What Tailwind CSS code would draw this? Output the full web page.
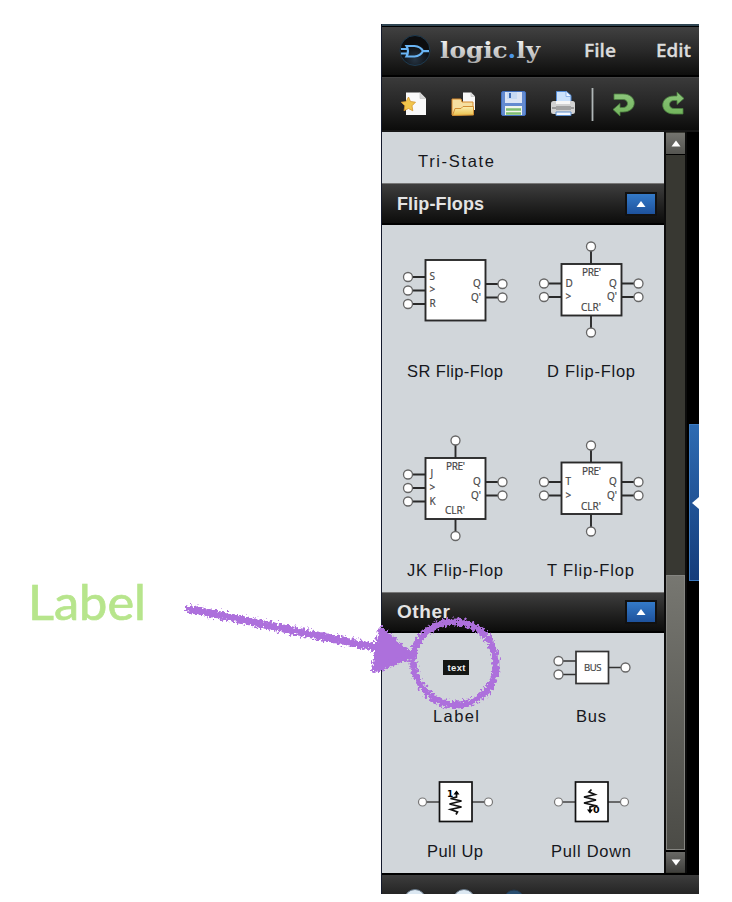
<!DOCTYPE html>
<html lang="en">
<head>
<meta charset="utf-8">
<title>logic.ly</title>
<script src="https://cdn.jsdelivr.net/npm/@tailwindcss/browser@4"></script>
</head>
<body class="bg-white">
<main class="relative w-[732px] h-[902px] overflow-hidden bg-white pt-6 pl-[381px]">
  <p class="absolute left-[28px] top-[566px] whitespace-nowrap">
    <svg class="block" width="140" height="74" font-family="Lato, sans-serif"><text x="0" y="54" font-size="48" fill="#b7e58c" stroke="#b7e58c" stroke-width=".7" textLength="118" lengthAdjust="spacingAndGlyphs">Label</text></svg>
  </p>

  <section class="flex flex-col w-[318px] h-[870px] bg-black border-l border-[#141a2c] overflow-hidden">
    <div class="h-[2px] shrink-0 bg-[#304653]"></div>
    <header class="h-[51px] shrink-0 border-t border-black bg-linear-to-b from-[#414141] via-[#292929] to-[#0e0e0d] border-b-2 border-b-black">
      <svg class="block" width="317" height="48" viewBox="382 27 317 48">
        <defs>
          <radialGradient id="orb" cy=".8"><stop offset="0" stop-color="#253443"/><stop offset="1" stop-color="#0c0d0f"/></radialGradient>
          <linearGradient id="silver" x2="0" y2="1"><stop offset="0" stop-color="#fff"/><stop offset="1" stop-color="#aaa"/></linearGradient>
        </defs>
        <circle cx="415" cy="50.500" r="15" fill="url(#orb)" stroke="#1d3a50"/>
        <g fill="none" stroke="#69b4f4" stroke-width="2.200"><path d="M406.500 46h8q6 .500 8.500 5q-2.500 5-8.500 5.500h-8q3-5.500 0-10.500ZM401 49h7M401 53.500h7M423 51.200h6"/></g>
        <text x="440" y="58" font-family="DejaVu Serif, serif" font-weight="bold" font-size="23" fill="url(#silver)" textLength="100" lengthAdjust="spacingAndGlyphs">logic<tspan fill="#4b96e6">.</tspan>ly</text>
        <g font-family="Open Sans, sans-serif" font-size="18" font-weight="600" fill="#dcdcdc" stroke="#dcdcdc" stroke-width=".3"><text x="584" y="57" textLength="32" lengthAdjust="spacingAndGlyphs">File</text><text x="656" y="57" textLength="35" lengthAdjust="spacingAndGlyphs">Edit</text></g>
      </svg>
    </header>
    <div class="h-[55px] shrink-0 border-t border-[#444] bg-linear-to-b from-[#3a3a3a] via-[#262626] to-[#0c0c0b] border-b-2 border-b-[#171717]">
      <svg class="block" width="317" height="52" viewBox="382 78 317 52">
        <defs>
          <linearGradient id="gold" x2="0" y2="1"><stop offset="0" stop-color="#fbeeb0"/><stop offset="1" stop-color="#eac04c"/></linearGradient>
          <linearGradient id="green" x2="0" y2="1"><stop offset="0" stop-color="#8cc57b"/><stop offset="1" stop-color="#72b45c"/></linearGradient>
        </defs>
        <path d="M406 92.500h14l6 6V115h-20Z" fill="#f9f9f9"/><path d="M420 92.500v6h6" fill="#d7d7d7" stroke="#c4c4c4" stroke-width=".7"/>
        <path d="m408.500 97 2 4.500 5 .700-3.500 3.600.8 5-4.300-2.300-4.500 2.300.8-5-3.600-3.600 5-.700Z" fill="#f1c64c" stroke="#d5962c" stroke-width=".8"/>
        <path d="M463 92.500h8l4 4V110h-12Z" fill="#f8f8f8"/><path d="M471 92.500v4h4" fill="#ddd" stroke="#bbb" stroke-width=".6"/>
        <path d="M452 115V99h9l1 3h11v12Z" fill="#f6dfa0" stroke="#d78a2d"/><path d="M452.500 115.500 455 108.500h6l2-2h10.500v8.500Z" fill="url(#gold)" stroke="#d28f35"/>
        <rect x="501.500" y="91.500" width="24" height="24" rx="1.500" fill="#648bd0" stroke="#4371c0"/><path d="M505 92h17v11h-17Z" fill="#dce5f5"/><path d="M507 92h10v7h-10Z" fill="#c7daf4"/><path d="M509 93h2v5h-2Z" fill="#3f6cb5"/><path d="M505 106h17v9h-17Z" fill="#f1f5ed"/><path d="M506 109.500h15M506 113.500h15" stroke="#7fbd70" stroke-width="2.500"/>
        <path d="M556.500 103V91.500h10l4.500 4V104Z" fill="#cce2fb" stroke="#568ed9"/><path d="M566 91.500v5h5" fill="#edf5ff" stroke="#6d9ce0" stroke-width=".7"/>
        <rect x="551" y="101" width="24" height="13" rx="2.500" fill="#d2d2d2"/><path d="M556 101h14v3h-14Z" fill="#f7f7f7"/><path d="M552 108h22" stroke="#8a8a8a" stroke-width="1.500"/><path d="M556 106h15v4h-15Z" fill="#a2a2a2"/><path d="M556 112h15v3.500h-15Z" fill="#f5f9ff" stroke="#5c8ecd"/>
        <path d="M592.500 88v33" stroke="#b0b6b7" stroke-width="1.800"/>
        <path d="M614 94h9c15 0 15 18 0 18h-3v4l-7-6.500 7-6v4h3c6 0 6-8 0-8h-9Z" fill="url(#green)" stroke="#4b8140" stroke-width=".8"/>
        <path d="M683 114h-9c-15 0-15-18 0-18h3v-4l7 6.500-7 6v-4h-3c-6 0-6 8 0 8h9Z" fill="url(#green)" stroke="#4b8140" stroke-width=".8"/>
      </svg>
    </div>

    <div class="flex h-[741px] shrink-0">
      <div class="w-[282px] bg-[#d1d6da]">
        <svg class="block h-[51px] w-[282px]" viewBox="382 132 282 51"><text x="418" y="166.500" font-family="Liberation Sans, sans-serif" font-size="16.500" fill="#16171c" textLength="76">Tri-State</text></svg>
        <div class="flex h-[42px] items-center justify-between border-t border-[#777] border-b-2 border-b-black bg-linear-to-b from-[#3e3e3e] to-[#0d0d0c] pl-[15px] pr-[7px]">
          <svg width="95" height="24"><text y="17.500" font-family="Liberation Sans, sans-serif" font-weight="bold" font-size="18" fill="#e4e4e4" textLength="87">Flip-Flops</text></svg>
          <span class="flex h-[24px] w-[32px] items-center justify-center border-2 border-[#111] bg-linear-to-b from-[#347ac8] to-[#1e529c]"><svg width="10" height="8"><path d="m.5 7 4.500-6 4.500 6Z" fill="#fff"/></svg></span>
        </div>

        <div class="grid h-[367px] grid-cols-[136px_136px] grid-rows-[183px_184px] pl-[5px] text-[#16171c]">
          <svg width="136" height="183" viewBox="387 225 136 183">
            <g fill="#fff" stroke="#2a2a2a" stroke-width="1.900"><path d="M408 277h18M408 290.500h18M408 304h18M485 284h18M485 297.500h18"/><rect x="425.500" y="260" width="60" height="60.500"/><g stroke="#666" stroke-width="1.300"><circle cx="408" cy="277" r="4.500"/><circle cx="408" cy="290.500" r="4.500"/><circle cx="408" cy="304" r="4.500"/><circle cx="502.500" cy="284" r="4.500"/><circle cx="502.500" cy="297.500" r="4.500"/></g></g>
            <g font-family="Open Sans, sans-serif" font-size="10" fill="#444" stroke="#444" stroke-width=".2"><text x="429.500" y="279.500">S</text><text x="429.500" y="293">&gt;</text><text x="429.500" y="306.500">R</text><text x="473" y="287">Q</text><text x="471" y="300.500">Q'</text></g>
            <text x="407" y="376.500" font-family="Liberation Sans, sans-serif" font-size="16.500" fill="currentColor" textLength="96">SR Flip-Flop</text>
          </svg>
          <svg width="136" height="183" viewBox="523 225 136 183">
            <g fill="#fff" stroke="#2a2a2a" stroke-width="1.900"><path d="M544 283.500h18M544 297h18M620 283.500h18M620 297h18M591 247v17M591 315v17"/><rect x="561.500" y="264" width="60" height="51.500"/><g stroke="#666" stroke-width="1.300"><circle cx="544" cy="283.500" r="4.500"/><circle cx="544" cy="297" r="4.500"/><circle cx="638.500" cy="283.500" r="4.500"/><circle cx="638.500" cy="297" r="4.500"/><circle cx="591" cy="246.500" r="4.500"/><circle cx="591" cy="332.500" r="4.500"/></g></g>
            <g font-family="Open Sans, sans-serif" font-size="10" fill="#444" stroke="#444" stroke-width=".2"><text x="565.500" y="286.500">D</text><text x="565.500" y="300">&gt;</text><text x="609" y="286.500">Q</text><text x="607" y="300">Q'</text><text x="582" y="275.500" textLength="19">PRE'</text><text x="581" y="310.500" textLength="20">CLR'</text></g>
            <text x="547" y="376.500" font-family="Liberation Sans, sans-serif" font-size="16.500" fill="currentColor" textLength="88">D Flip-Flop</text>
          </svg>
          <svg width="136" height="184" viewBox="387 408 136 184">
            <g fill="#fff" stroke="#2a2a2a" stroke-width="1.900"><path d="M408 474.500h18M408 488h18M408 501.500h18M485 482h18M485 495.500h18M455.500 441v17M455.500 519v17"/><rect x="425.500" y="458" width="60" height="61"/><g stroke="#666" stroke-width="1.300"><circle cx="408" cy="474.500" r="4.500"/><circle cx="408" cy="488" r="4.500"/><circle cx="408" cy="501.500" r="4.500"/><circle cx="502.500" cy="482" r="4.500"/><circle cx="502.500" cy="495.500" r="4.500"/><circle cx="455.500" cy="440.500" r="4.500"/><circle cx="455.500" cy="536" r="4.500"/></g></g>
            <g font-family="Open Sans, sans-serif" font-size="10" fill="#444" stroke="#444" stroke-width=".2"><text x="430.500" y="477">J</text><text x="429.500" y="491">&gt;</text><text x="429.500" y="504.500">K</text><text x="473" y="485">Q</text><text x="471" y="498.500">Q'</text><text x="446" y="469.500" textLength="19">PRE'</text><text x="445" y="514" textLength="20">CLR'</text></g>
            <text x="407" y="575.500" font-family="Liberation Sans, sans-serif" font-size="16.500" fill="currentColor" textLength="96">JK Flip-Flop</text>
          </svg>
          <svg width="136" height="184" viewBox="523 408 136 184">
            <g fill="#fff" stroke="#2a2a2a" stroke-width="1.900"><path d="M544 482h18M544 495.500h18M620 482h18M620 495.500h18M591 446v17M591 514v17"/><rect x="561.500" y="462.500" width="60" height="51.500"/><g stroke="#666" stroke-width="1.300"><circle cx="544" cy="482" r="4.500"/><circle cx="544" cy="495.500" r="4.500"/><circle cx="638.500" cy="482" r="4.500"/><circle cx="638.500" cy="495.500" r="4.500"/><circle cx="591" cy="445.500" r="4.500"/><circle cx="591" cy="531.500" r="4.500"/></g></g>
            <g font-family="Open Sans, sans-serif" font-size="10" fill="#444" stroke="#444" stroke-width=".2"><text x="565.500" y="485">T</text><text x="565.500" y="498.500">&gt;</text><text x="609" y="485">Q</text><text x="607" y="498.500">Q'</text><text x="582" y="474.500" textLength="19">PRE'</text><text x="581" y="509.500" textLength="20">CLR'</text></g>
            <text x="547" y="575.500" font-family="Liberation Sans, sans-serif" font-size="16.500" fill="currentColor" textLength="87">T Flip-Flop</text>
          </svg>
        </div>

        <div class="flex h-[41px] items-center justify-between border-t border-[#777] border-b-2 border-b-black bg-linear-to-b from-[#3e3e3e] to-[#0d0d0c] pl-[15px] pr-[7px]">
          <svg width="95" height="24"><text y="18" font-family="Liberation Sans, sans-serif" font-weight="bold" font-size="19" fill="#e4e4e4" textLength="53">Other</text></svg>
          <span class="flex h-[24px] w-[32px] items-center justify-center border-2 border-[#111] bg-linear-to-b from-[#347ac8] to-[#1e529c]"><svg width="10" height="8"><path d="m.5 7 4.500-6 4.500 6Z" fill="#fff"/></svg></span>
        </div>
        <div class="grid h-[240px] grid-cols-[136px_136px] grid-rows-[120px_120px] pl-[5px] text-[#16171c]">
          <svg width="136" height="120" viewBox="387 633 136 120">
            <rect x="443" y="660" width="26" height="15" fill="#151715"/><text x="447.500" y="670.500" font-family="Liberation Sans, sans-serif" font-size="9.500" font-weight="bold" fill="#eee" textLength="18">text</text>
            <text x="433" y="722" font-family="Liberation Sans, sans-serif" font-size="16.500" fill="currentColor" textLength="46">Label</text>
          </svg>
          <svg width="136" height="120" viewBox="523 633 136 120">
            <g fill="#fff" stroke="#333" stroke-width="1.700"><path d="M558 661h18M558 674.500h18M608 667.500h18"/><rect x="576" y="651.500" width="32.500" height="32"/><g stroke="#666" stroke-width="1.300"><circle cx="558.500" cy="661" r="4.500"/><circle cx="558.500" cy="674.500" r="4.500"/><circle cx="625.500" cy="667.500" r="4.500"/></g></g>
            <text x="584" y="670.500" font-family="Open Sans, sans-serif" font-size="9.500" fill="#444" stroke="#444" stroke-width=".2" textLength="17.500">BUS</text>
            <text x="576" y="722" font-family="Liberation Sans, sans-serif" font-size="16.500" fill="currentColor" textLength="30">Bus</text>
          </svg>
          <svg width="136" height="120" viewBox="387 753 136 120">
            <g fill="#fff" stroke="#444" stroke-width="1.700"><path d="M422 802h18M472 802h18"/><rect x="439.500" y="782" width="32.500" height="39.500" stroke="#111"/><g stroke="#777" stroke-width="1.200"><circle cx="422.500" cy="802" r="4"/><circle cx="488.500" cy="802" r="4"/></g></g>
            <path d="M456.500 792v5l-6 1.500 11 2.500-12 3 12 3-11 2.500 7 2.500-1.500 2.500" fill="none" stroke="#111" stroke-width="1.700"/><path d="m453.500 794.500 3-4 3 4Z"/><text x="447" y="796.500" font-family="DejaVu Sans, sans-serif" font-weight="bold" font-size="9">1</text>
            <text x="427" y="857" font-family="Liberation Sans, sans-serif" font-size="16.500" fill="currentColor" textLength="56">Pull Up</text>
          </svg>
          <svg width="136" height="120" viewBox="523 753 136 120">
            <g fill="#fff" stroke="#444" stroke-width="1.700"><path d="M558 802h18M608 802h18"/><rect x="575.500" y="782" width="32.500" height="39.500" stroke="#111"/><g stroke="#777" stroke-width="1.200"><circle cx="558.500" cy="802" r="4"/><circle cx="624.500" cy="802" r="4"/></g></g>
            <path d="m591.500 789.500-2.500 2.500 6 2.500-11 2.500 12 3-12 3 11 2.500-5 1.500v4" fill="none" stroke="#111" stroke-width="1.700"/><path d="m587 809.500 3 4 3-4Z"/><text x="593" y="812.500" font-family="DejaVu Sans, sans-serif" font-weight="bold" font-size="9.500">0</text>
            <text x="551" y="857" font-family="Liberation Sans, sans-serif" font-size="16.500" fill="currentColor" textLength="80">Pull Down</text>
          </svg>
        </div>
      </div>
      <div class="flex w-[23px] flex-col border-x-2 border-[#0c0c0c] bg-[#383832] pt-px">
        <div class="flex h-[22px] items-center justify-center border-b border-black bg-linear-to-b from-[#74746f] to-[#555551]"><svg width="10" height="7"><path d="m.5 6.500 4.500-6 4.500 6Z" fill="#fff"/></svg></div>
        <div class="h-[420px]"></div>
        <div class="h-[275px] border border-[#858581] bg-linear-to-b from-[#777771] to-[#4b4b46]"></div>
        <div class="flex h-[22px] items-center justify-center border-t-2 border-black bg-linear-to-b from-[#696966] to-[#40403d]"><svg width="10" height="7"><path d="m.5.5 4.500 6 4.500-6Z" fill="#fff"/></svg></div>
      </div>
      <div class="flex grow flex-col items-end bg-black pt-[292px]">
        <div class="flex h-[157px] w-[10px] items-center justify-end border border-r-0 border-[#3c7bc2] bg-linear-to-b from-[#2e6bb2] to-[#153c7b]"><svg width="7" height="12"><path d="M0 6 7 0v12Z" fill="#fff"/></svg></div>
      </div>
    </div>
    <footer class="h-[21px] shrink-0 border-t-2 border-black bg-linear-to-b from-[#3d3d3d] to-[#252525]">
      <svg class="block" width="317" height="19"><circle cx="33" cy="25" r="10.500" fill="#dce8f2" stroke="#68798a"/><circle cx="82" cy="25" r="10.500" fill="#dce8f2" stroke="#68798a"/><circle cx="132" cy="25" r="10" fill="#294e70" stroke="#25384b"/></svg>
    </footer>
  </section>

  <svg class="pointer-events-none absolute left-0 top-0" width="732" height="902">
    <defs><filter id="crayon" x="180" y="590" width="330" height="135" filterUnits="userSpaceOnUse"><feTurbulence type="fractalNoise" baseFrequency=".4" numOctaves="2" seed="4"/><feDisplacementMap in="SourceGraphic" scale="9" xChannelSelector="R" yChannelSelector="G"/></filter></defs>
    <g filter="url(#crayon)" fill="none" stroke="#ad70dc" stroke-linecap="round" stroke-linejoin="round">
      <path d="m190 609 192 40" stroke-width="8"/>
      <path d="m381 630 30 26-37 14Z" fill="#ad70dc" stroke-width="6"/>
      <path d="M455 622c23 0 41 18 41 43 0 23-18 40-40 40-23 0-41-19-43-43-1-22 17-40 42-40Z" stroke-width="7"/>
    </g>
  </svg>
</main>
</body>
</html>
